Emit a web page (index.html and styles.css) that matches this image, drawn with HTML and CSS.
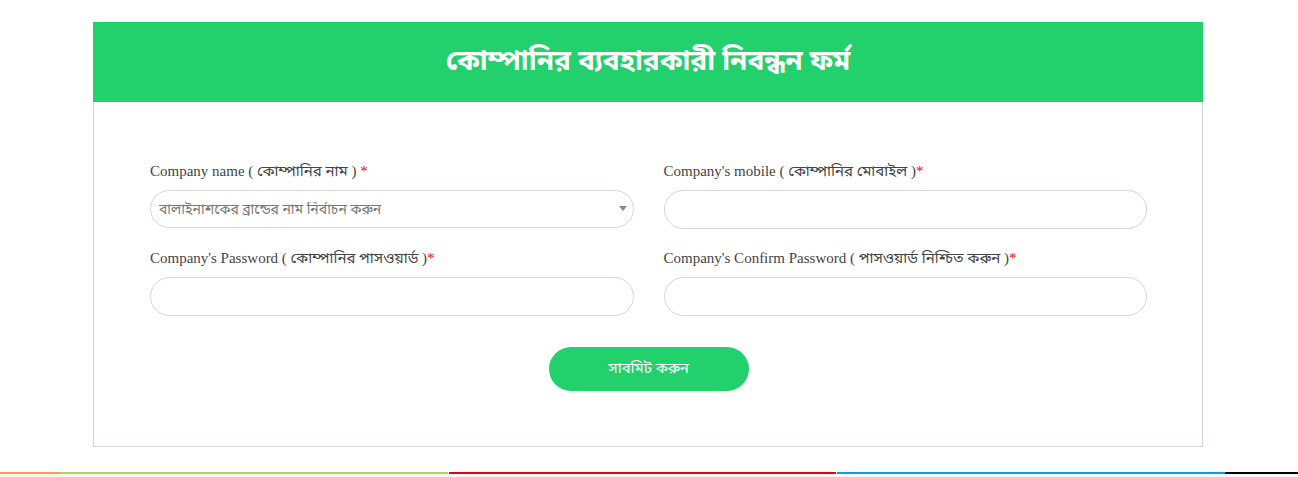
FILE: index.html
```html
<!DOCTYPE html>
<html lang="bn">
<head>
    <meta charset="UTF-8">
    <title>কোম্পানির ব্যবহারকারী নিবন্ধন ফর্ম</title>
    <link rel="stylesheet" href="styles.css">
</head>
<body>
    <div class="page">
        <div class="register-card">
            <div class="card-header">
                <h2>কোম্পানির ব্যবহারকারী নিবন্ধন ফর্ম</h2>
            </div>
            <form class="card-body" onsubmit="return false">
                <div class="form-grid">
                    <div class="form-group">
                        <label for="company">Company name ( কোম্পানির নাম ) <span class="req">*</span></label>
                        <div class="select-wrap">
                            <select id="company">
                                <option>বালাইনাশকের ব্রান্ডের নাম নির্বাচন করুন</option>
                            </select>
                        </div>
                    </div>
                    <div class="form-group">
                        <label for="mobile">Company's mobile ( কোম্পানির মোবাইল )<span class="req">*</span></label>
                        <input type="text" id="mobile">
                    </div>
                    <div class="form-group">
                        <label for="password">Company's Password ( কোম্পানির পাসওয়ার্ড )<span class="req">*</span></label>
                        <input type="password" id="password">
                    </div>
                    <div class="form-group">
                        <label for="confirm">Company's Confirm Password ( পাসওয়ার্ড নিশ্চিত করুন )<span class="req">*</span></label>
                        <input type="password" id="confirm">
                    </div>
                </div>
                <div class="actions">
                    <button type="submit" class="submit-btn">সাবমিট করুন</button>
                </div>
            </form>
        </div>
    </div>
    <div class="color-line">
        <span class="c-orange"></span>
        <span class="c-green"></span>
        <span class="c-red"></span>
        <span class="c-blue"></span>
        <span class="c-black"></span>
    </div>
    <div class="footer-strip"></div>
</body>
</html>
```

FILE: styles.css
```css
body {
    margin: 0;
    background: #fff;
    font-family: 'Liberation Serif', 'Noto Sans Bengali', serif;
    color: #333;
}

.page {
    width: 1110px;
    margin-left: calc(50% - 556px);
    padding-top: 22px;
    padding-bottom: 25px;
}

.register-card {
    border: 1px solid #d3d6dc;
    border-top: none;
}

.card-header {
    background: #22d06c;
    height: 80px;
    margin: 0 -1px;
    display: flex;
    align-items: center;
    justify-content: center;
}

.card-header h2 {
    margin: 0;
    color: #fff;
    font-size: 28px;
    font-weight: bold;
}

.card-body {
    padding: 58px 55px 55px 56px;
}

.form-grid {
    display: grid;
    grid-template-columns: 1fr 1fr;
    column-gap: 30px;
    row-gap: 18px;
}

.form-group label {
    display: block;
    font-size: 15px;
    line-height: 22px;
    margin-bottom: 8px;
    color: #444;
}

.req {
    color: #ff0000;
}

.form-group input,
.form-group select {
    width: 100%;
    height: 38px;
    border: 1px solid #d3d6dc;
    border-radius: 20px;
    box-sizing: border-box;
    background: #fff;
    font-size: 14px;
    font-family: inherit;
    outline: none;
}

.form-group input {
    height: 39px;
    padding: 0 14px;
}

.select-wrap {
    position: relative;
}

.form-group select {
    appearance: none;
    padding: 0 30px 0 8px;
    color: #777;
}

.select-wrap::after {
    content: '';
    position: absolute;
    right: 7px;
    top: 16px;
    border-left: 4px solid transparent;
    border-right: 4px solid transparent;
    border-top: 5px solid #888;
}

.actions {
    display: flex;
    justify-content: center;
    margin-top: 31px;
}

.submit-btn {
    width: 200px;
    height: 44px;
    border: none;
    border-radius: 22px;
    background: #22d06c;
    color: #fff;
    font-family: inherit;
    font-size: 15px;
    cursor: pointer;
}

.color-line {
    display: flex;
    height: 2px;
}

.color-line span {
    display: block;
}

.c-orange { width: 60px; background: #ff9a4d; }
.c-green { width: 388px; background: #b3cf5b; margin-right: 1px; }
.c-red { width: 387px; background: #e3001b; margin-right: 1px; }
.c-blue { width: 388px; background: #00a0e9; }
.c-black { flex: 1; background: #000; }

.footer-strip {
    height: 20px;
    background: #f7f7f7;
}
```
